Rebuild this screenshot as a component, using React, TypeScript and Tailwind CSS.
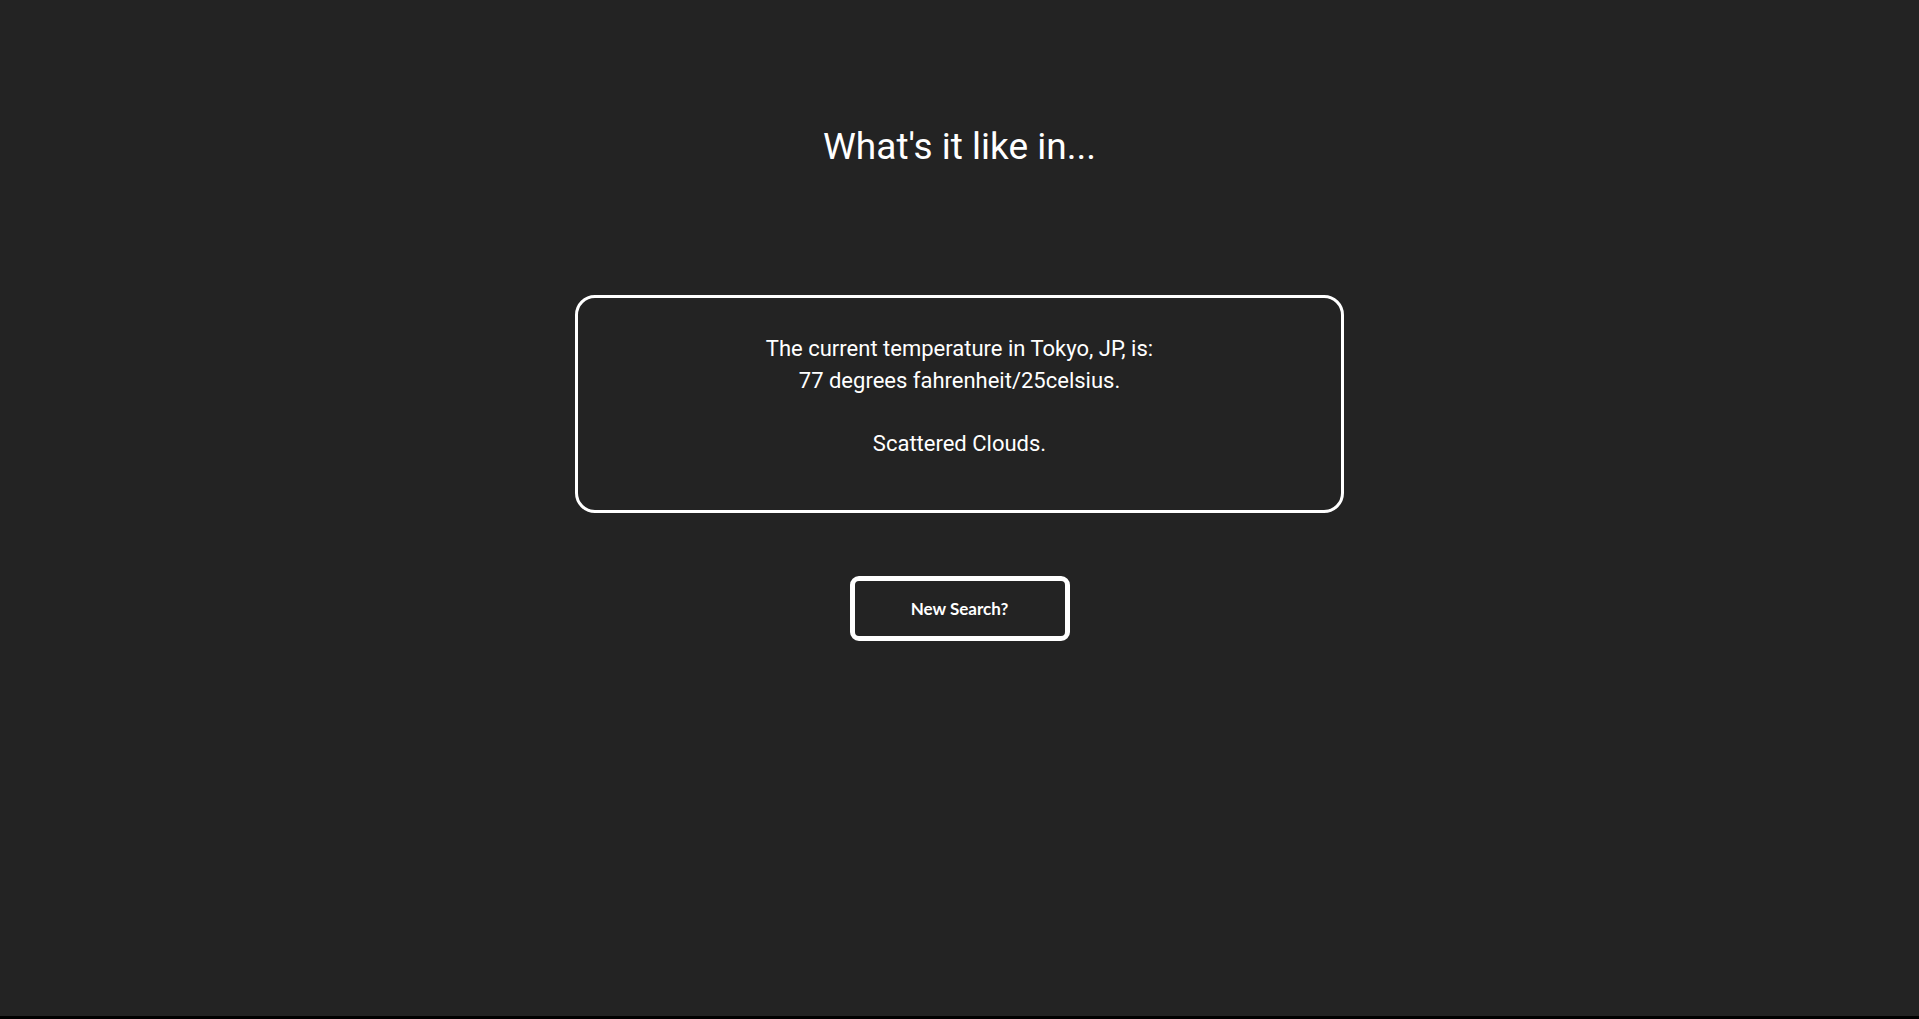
export default function App() {
  return (
    <div className="h-[1019px] bg-black">
      <main
        className="h-[1016px] bg-[#232323] text-white flex flex-col items-center"
        style={{ fontFamily: 'Roboto, "Noto Sans", sans-serif' }}
      >
        <h1 className="mt-[127px] text-[37px] leading-[40px] font-normal">What's it like in...</h1>

        <section className="mt-[128px] w-[769px] h-[218px] border-[3px] border-white rounded-[20px] pt-[35px] text-center text-[22px] leading-[31.5px]">
          The current temperature in Tokyo, JP, is:
          <br />
          77 degrees fahrenheit/25celsius.
          <br />
          <br />
          Scattered Clouds.
        </section>

        <button
          className="mt-[63px] w-[220px] h-[65px] border-[5px] border-white rounded-[9px] text-[17px] font-bold text-white"
          style={{ fontFamily: 'Lato, "Noto Sans", sans-serif' }}
        >
          New Search?
        </button>
      </main>
    </div>
  )
}
